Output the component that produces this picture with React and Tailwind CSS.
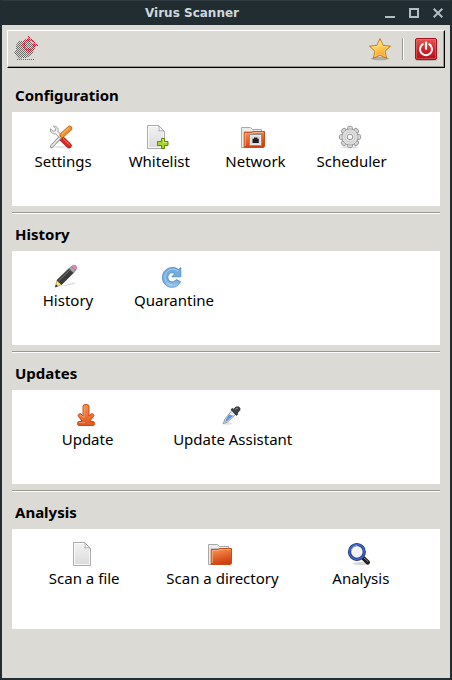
import React from "react";

function AppLogo() {
  return (
    <svg viewBox="0 0 24 26" className="h-[26px] w-6">
      <defs>
        <pattern id="dither" width="2" height="2" patternUnits="userSpaceOnUse">
          <rect width="1" height="1" fill="#6a6a68" />
          <rect x="1" y="1" width="1" height="1" fill="#6a6a68" />
        </pattern>
        <pattern id="ditherRed" width="2" height="2" patternUnits="userSpaceOnUse">
          <rect width="1" height="1" fill="#c81428" />
          <rect x="1" y="1" width="1" height="1" fill="#c81428" />
        </pattern>
      </defs>
      <path d="M5 5h4l3-1h3l5 5v4l-1 4-3 3-4 2H8l-3 1-5-6 2-3V9z" fill="url(#dither)" />
      <path d="M2 23h19v1H2z" fill="url(#dither)" />
      <circle cx="15" cy="9" r="5" fill="none" stroke="#c81428" strokeWidth="1" strokeDasharray="3 1" opacity="0.75" />
      <path d="M14 0h2v6h-2zM14 12h2v5h-2zM7 8h5v2H7zM18 8h6v2h-6z" fill="url(#ditherRed)" />
      <circle cx="15" cy="9" r="6" fill="none" stroke="url(#ditherRed)" strokeWidth="1.5" />
    </svg>
  );
}

function StarIcon() {
  return (
    <svg viewBox="0 0 24 24" className="h-6 w-6">
      <defs>
        <linearGradient id="star" x1="0" y1="0" x2="0.3" y2="1">
          <stop offset="0" stopColor="#fff09a" />
          <stop offset="0.5" stopColor="#ffd05a" />
          <stop offset="1" stopColor="#f79a22" />
        </linearGradient>
      </defs>
      <ellipse cx="12" cy="21.5" rx="9" ry="1.8" fill="#000" opacity="0.2" />
      <path
        d="M12 1.6L15.1 8.4L22.5 9.2L17.1 14.2L18.6 21.6L12 18L5.4 21.6L6.9 14.2L1.5 9.2L8.9 8.4Z"
        fill="url(#star)"
        stroke="#c07a1e"
        strokeLinejoin="round"
      />
      <path d="M12 4L14.4 9.3L20 10L16 13.7L17.2 19.4L12 16.8L6.8 19.4L8 13.7L4 10L9.6 9.3Z" fill="none" stroke="#ffe58c" strokeWidth="0.7" opacity="0.8" />
    </svg>
  );
}

function PowerIcon() {
  return (
    <svg viewBox="0 0 24 24" className="h-6 w-6">
      <defs>
        <linearGradient id="power" x1="0" y1="0" x2="0" y2="1">
          <stop offset="0" stopColor="#e35a52" />
          <stop offset="0.55" stopColor="#d0222a" />
          <stop offset="1" stopColor="#b50f1c" />
        </linearGradient>
      </defs>
      <ellipse cx="12" cy="23" rx="11" ry="1" fill="#000" opacity="0.2" />
      <rect x="1.5" y="1.5" width="21" height="21" rx="1.5" fill="url(#power)" stroke="#a51320" />
      <rect x="2.5" y="2.5" width="19" height="19" rx="0.5" fill="none" stroke="#f08c84" opacity="0.4" />
      <path d="M8.8 7.2A6 6 0 1 0 15.2 7.2" fill="none" stroke="#fff" strokeWidth="2" strokeLinecap="round" />
      <path d="M12 5.5v6.3" stroke="#fff" strokeWidth="2.2" strokeLinecap="round" />
    </svg>
  );
}

function ToolsIcon() {
  return (
    <svg viewBox="0 0 24 24" className="h-6 w-6">
      <ellipse cx="12" cy="22" rx="10" ry="1.2" fill="#000" opacity="0.1" />
      <path d="M12.6 13.4L20 20.6" stroke="#a81512" strokeWidth="5.4" strokeLinecap="round" />
      <path d="M12.6 13.4L20 20.6" stroke="#dc2822" strokeWidth="4" strokeLinecap="round" />
      <path d="M14.2 13.6L20.4 19.6" stroke="#f4837a" strokeWidth="1" strokeLinecap="round" />
      <path d="M2.6 21.4L12 11.5" stroke="#8e8e8a" strokeWidth="3.4" strokeLinecap="round" />
      <path d="M2.8 21.2L12 11.5" stroke="#ededeb" strokeWidth="1.7" strokeLinecap="round" />
      <path
        d="M4.4 1.2L6.8 3.6L6.2 5.8L4 6.2L1.6 3.8C0.8 7 3.4 9.4 6.4 8.8L10.4 12.6L12.8 10.2L9 6.4C9.8 3.2 7.6 0.8 4.4 1.2Z"
        fill="#f0f0ee"
        stroke="#90908c"
        strokeWidth="0.9"
      />
      <path d="M13.2 10.2L20.6 3.3" stroke="#b8651c" strokeWidth="5.2" strokeLinecap="round" />
      <path d="M13.2 10.2L20.6 3.3" stroke="#ef9434" strokeWidth="3.8" strokeLinecap="round" />
      <path d="M13 9L19.6 2.9" stroke="#ffc888" strokeWidth="0.9" strokeLinecap="round" />
    </svg>
  );
}

function PageShape() {
  return (
    <>
      <defs>
        <linearGradient id="page" x1="0" y1="0" x2="0" y2="1">
          <stop offset="0" stopColor="#f3f3f3" />
          <stop offset="1" stopColor="#dadada" />
        </linearGradient>
      </defs>
      <path d="M3.5 0.5H14.5L20.5 6.5V23.5H3.5Z" fill="url(#page)" stroke="#acacac" />
      <path d="M4.5 1.5H14M4.5 1.5V22.5H19.5V8" fill="none" stroke="#fff" strokeWidth="0.8" />
      <path d="M14.5 0.5C15.4 2.3 15.4 4.4 14.8 6C16.8 5.4 19 5.6 20.5 6.5Z" fill="#fff" stroke="#a2a2a2" strokeWidth="0.9" />
    </>
  );
}

function FileIcon() {
  return (
    <svg viewBox="0 0 24 24" className="h-6 w-6">
      <PageShape />
    </svg>
  );
}

function FileAddIcon() {
  return (
    <svg viewBox="0 0 24 24" className="h-6 w-6">
      <g transform="translate(-1 0)">
        <PageShape />
      </g>
      <path
        d="M16.5 13.5H19.5V16.5H23V20.5H19.5V23.5H16.5V20.5H12.5V16.5H16.5Z"
        fill="#a9d42a"
        stroke="#5a8a06"
        strokeLinejoin="round"
      />
      <path d="M17.5 14.5H18.5V17.5H22" fill="none" stroke="#d6ef86" strokeWidth="0.8" />
    </svg>
  );
}

function FolderShape() {
  return (
    <>
      <defs>
        <linearGradient id="folder" x1="0" y1="0" x2="0.3" y2="1">
          <stop offset="0" stopColor="#f59a5c" />
          <stop offset="0.55" stopColor="#e5672c" />
          <stop offset="1" stopColor="#cf3f12" />
        </linearGradient>
      </defs>
      <path d="M0.5 22.5V2.5H9.5L11.5 4.5H20.5V8H3.5V22.5Z" fill="#ececec" stroke="#a9a9a9" />
      <path d="M2.5 6.5H19.5" stroke="#c6c6c6" />
      <path d="M3.2 22.5V7.5L10 7.5L12 6.5H23.5V21.5L22.5 22.5Z" fill="url(#folder)" stroke="#cc4a17" />
      <path d="M4.3 21V8.5H10.4L12.4 7.5H22.5" fill="none" stroke="#fbb98c" strokeWidth="0.8" />
    </>
  );
}

function FolderIcon() {
  return (
    <svg viewBox="0 0 24 24" className="h-6 w-6">
      <FolderShape />
    </svg>
  );
}

function NetworkFolderIcon() {
  return (
    <svg viewBox="0 0 24 24" className="h-6 w-6">
      <FolderShape />
      <rect x="8.5" y="9.5" width="12" height="11" fill="#f6f6f6" stroke="#8e8e8e" />
      <rect x="9.5" y="10.5" width="10" height="9" fill="#dcdcdc" />
      <path d="M11.5 18V13.8H13V12.5H16.4V13.8H17.8V18Z" fill="#1c2024" />
    </svg>
  );
}

function GearIcon() {
  return (
    <svg viewBox="0 0 24 24" className="h-6 w-6">
      <ellipse cx="12" cy="22.2" rx="8" ry="1.2" fill="#000" opacity="0.12" />
      <g fill="#dedede" stroke="#9a9a9a" strokeWidth="1">
        {[0, 45, 90, 135, 180, 225, 270, 315].map((angle) => (
          <path key={angle} d="M9.2 5L9.8 2.2Q10 1.4 10.8 1.4H13.2Q14 1.4 14.2 2.2L14.8 5Z" transform={`rotate(${angle} 12 12)`} />
        ))}
        <circle cx="12" cy="12" r="8" />
      </g>
      <circle cx="12" cy="12" r="7.6" fill="#dedede" />
      <circle cx="12" cy="12" r="5" fill="#ececec" stroke="#c8c8c8" />
      <circle cx="12" cy="12" r="2.8" fill="#fff" stroke="#8f8f8f" />
    </svg>
  );
}

function PencilIcon() {
  return (
    <svg viewBox="0 0 24 24" className="h-6 w-6">
      <path d="M3 23L20 18.5Q23 19.5 18 20.5Z" fill="#000" opacity="0.15" />
      <path d="M1.4 23L3 16.2L7.6 20.6Z" fill="#f4e08a" stroke="#a08a3c" strokeWidth="0.7" />
      <path d="M1.2 23.2L1.9 20.4L3.9 22.3Z" fill="#222" />
      <path d="M3 16.2L15.2 4.4L19.6 8.6L7.6 20.6Z" fill="#3a3c3a" stroke="#1e201e" strokeWidth="0.7" />
      <path d="M4.6 17L16.4 5.6" stroke="#777a77" strokeWidth="1" />
      <path d="M15 4.6L17.6 2.4L21.6 6.4L19.5 8.8Z" fill="#a7a9a7" stroke="#777" strokeWidth="0.7" />
      <path d="M17.4 2.6Q19.4 0.4 21.6 1.6Q24 3.6 21.5 6.5Z" fill="#dc8fc0" stroke="#a4608c" strokeWidth="0.7" />
    </svg>
  );
}

function RedoIcon() {
  return (
    <svg viewBox="0 0 24 24" className="h-6 w-6">
      <defs>
        <linearGradient id="redo" x1="0" y1="0" x2="0" y2="1">
          <stop offset="0" stopColor="#72aade" />
          <stop offset="0.7" stopColor="#78afe2" />
          <stop offset="1" stopColor="#a9cdf0" />
        </linearGradient>
      </defs>
      <path
        d="M12.5 3.5C15 3.3 16.8 4.2 18.3 5.7L20.8 3.6V12.8H11.8L14.6 9.8C11.8 7.4 7.8 9.8 7.9 13.6C8.2 18.2 13.4 19.4 16.2 15.6L20.6 17.6C18.6 21.8 15.2 23.4 11.6 23.3C6.4 23.1 2.4 19.2 2.4 13.4C2.5 7.6 6.8 3.6 12.5 3.5Z"
        fill="url(#redo)"
        stroke="#4c86c0"
        strokeWidth="0.8"
      />
      <path d="M18.3 7.5C13 2.5 5.2 6 5 13C5 17 7.8 20.8 12 20.8" fill="none" stroke="#b5d6f4" strokeWidth="0.8" />
    </svg>
  );
}

function DownloadIcon() {
  return (
    <svg viewBox="0 0 24 24" className="h-6 w-6">
      <defs>
        <linearGradient id="download" x1="0" y1="0" x2="0" y2="1">
          <stop offset="0" stopColor="#f39352" />
          <stop offset="1" stopColor="#e4571f" />
        </linearGradient>
      </defs>
      <path
        d="M9 3.2Q9 1.5 12 1.5T15 3.2V13L17 10.9Q18.4 10.3 19.4 11.4T19.4 13.6L15.6 18.5H19Q20.5 18.5 20.5 20.5T19 22.5H5Q3.5 22.5 3.5 20.5T5 18.5H8.4L4.6 13.6Q3.6 12.4 4.6 11.4T7 10.9L9 13Z"
        fill="url(#download)"
        stroke="#c8481a"
        strokeLinejoin="round"
      />
      <path d="M10.2 3.6V14.6L6.2 12M5 19.6H11" fill="none" stroke="#fcb888" strokeWidth="0.6" />
    </svg>
  );
}

function DropperIcon() {
  return (
    <svg viewBox="0 0 24 24" className="h-6 w-6">
      <ellipse cx="8" cy="20.5" rx="5" ry="1.2" fill="#000" opacity="0.12" />
      <path d="M13 7.4L16.8 11.2L8.8 18.8L4.4 20.6L5.8 16.2Z" fill="#e8eef4" stroke="#8a8f94" strokeWidth="0.9" />
      <path d="M10 11.4L14.2 12.8L8.2 18L6 19L6.8 16.4Z" fill="#5b98dc" />
      <path
        d="M12 6.6L13.4 5.4L14.8 6.4C15.8 4.2 18.2 3.2 20 4.2C22 5.6 21 8.4 18 9.8L18.8 11.2L17.4 12.4Z"
        fill="#3c4246"
        stroke="#23282b"
        strokeWidth="0.8"
        strokeLinejoin="round"
      />
      <path d="M15.8 6.8Q17 5 19 5.2" fill="none" stroke="#949a9e" strokeWidth="0.9" />
    </svg>
  );
}

function SearchIcon() {
  return (
    <svg viewBox="0 0 24 24" className="h-6 w-6">
      <ellipse cx="14" cy="21.6" rx="8" ry="1.6" fill="#000" opacity="0.16" />
      <path d="M16.2 16L20.8 20.4" stroke="#1e1e1e" strokeWidth="4.4" strokeLinecap="round" />
      <path d="M16.8 15.8L21 19.6" stroke="#858585" strokeWidth="1" strokeLinecap="round" />
      <circle cx="9.9" cy="9.9" r="7.4" fill="#f2f2f4" stroke="#1f3580" strokeWidth="3.2" />
      <circle cx="9.9" cy="9.9" r="7.4" fill="none" stroke="#4266c0" strokeWidth="1.6" />
      <path d="M4.2 8Q5.8 3.4 10.4 3.4" fill="none" stroke="#8ba8e6" strokeWidth="0.9" />
      <path d="M6 10A4 4 0 0 1 10 6" fill="none" stroke="#fff" strokeWidth="1.5" />
    </svg>
  );
}

const sections = [
  {
    title: "Configuration",
    items: [
      { label: "Settings", Icon: ToolsIcon },
      { label: "Whitelist", Icon: FileAddIcon },
      { label: "Network", Icon: NetworkFolderIcon },
      { label: "Scheduler", Icon: GearIcon },
    ],
  },
  {
    title: "History",
    items: [
      { label: "History", Icon: PencilIcon },
      { label: "Quarantine", Icon: RedoIcon },
    ],
  },
  {
    title: "Updates",
    items: [
      { label: "Update", Icon: DownloadIcon },
      { label: "Update Assistant", Icon: DropperIcon },
    ],
  },
  {
    title: "Analysis",
    items: [
      { label: "Scan a file", Icon: FileIcon },
      { label: "Scan a directory", Icon: FolderIcon },
      { label: "Analysis", Icon: SearchIcon },
    ],
  },
];

function TitleBar() {
  return (
    <header className="flex h-[25px] items-center border-t border-[#2f3a40] pl-1 text-[#cfd8dc]">
      <h1 className="flex-1 text-center font-['DejaVu_Sans',sans-serif] text-xs font-bold">Virus Scanner</h1>
      <button type="button" aria-label="Minimize" className="flex h-6 w-6 items-center justify-center">
        <svg viewBox="0 0 10 10" className="h-2.5 w-2.5">
          <path d="M0 8h10v2H0z" fill="#b0bec5" />
        </svg>
      </button>
      <button type="button" aria-label="Maximize" className="flex h-6 w-6 items-center justify-center">
        <svg viewBox="0 0 10 10" className="h-2.5 w-2.5">
          <path d="M1 1h8v8H1z" fill="none" stroke="#b0bec5" strokeWidth="2" />
        </svg>
      </button>
      <button type="button" aria-label="Close" className="flex h-6 w-6 items-center justify-center">
        <svg viewBox="0 0 10 10" className="h-2.5 w-2.5">
          <path d="M0.7 0.7l8.6 8.6M9.3 0.7L0.7 9.3" stroke="#b0bec5" strokeWidth="2" />
        </svg>
      </button>
    </header>
  );
}

function Toolbar() {
  return (
    <div className="mx-[5px] mt-[5px] border border-t-white border-r-black border-b-black border-l-white">
      <div className="flex h-9 items-center border-r border-b border-[#9a9a94] pr-[5px] pl-1.5">
        <AppLogo />
        <button type="button" aria-label="Favorites" className="ml-auto">
          <StarIcon />
        </button>
        <div className="mx-2.5 h-[22px] w-0.5 border-r border-l border-r-white border-l-[#9a9a94]" />
        <button type="button" aria-label="Quit">
          <PowerIcon />
        </button>
      </div>
    </div>
  );
}

function Section({ title, items }) {
  return (
    <section>
      <h2 className="flex h-[37px] items-center px-[3px] pt-1 text-[15px] font-bold">{title}</h2>
      <div className="min-h-[94px] bg-white px-[3px] pt-[13px] group-last:min-h-[100px]">
        <div className="grid w-max auto-cols-fr grid-flow-col">
          {items.map(({ label, Icon }) => (
            <button key={label} type="button" className="flex flex-col items-center px-[13px] text-[15px] leading-6 whitespace-nowrap">
              <span className="mr-1">
                <Icon />
              </span>
              {label}
            </button>
          ))}
        </div>
      </div>
    </section>
  );
}

export default function App() {
  return (
    <div className="flex min-h-screen flex-col bg-[#222d32] px-0.5 pb-0.5 font-['Noto_Sans',sans-serif] text-black">
      <TitleBar />
      <main className="flex-1 bg-[#dcdad5]">
        <Toolbar />
        <div className="mx-2.5 mt-[7px]">
          {sections.map((section, index) => (
            <div key={section.title} className="group">
              {index > 0 && <hr className="mt-1.5 h-0.5 border-t border-b border-t-[#999993] border-b-white" />}
              <Section {...section} />
            </div>
          ))}
        </div>
      </main>
    </div>
  );
}
